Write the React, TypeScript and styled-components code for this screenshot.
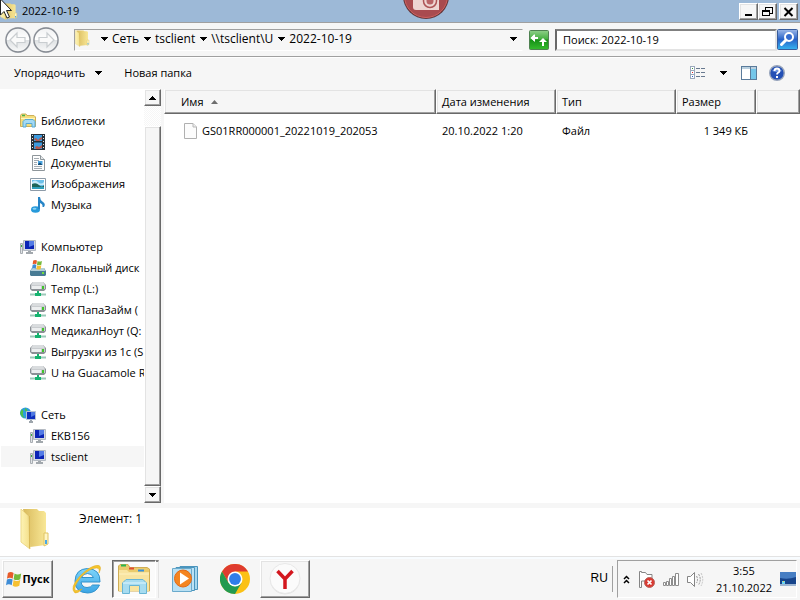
import React from "react";
import styled, { createGlobalStyle, css } from "styled-components";

const GlobalStyle = createGlobalStyle`
  * { box-sizing: border-box; }
  html, body, #root { height: 100%; }
  body { margin: 0; overflow: hidden; }
  body, button, input, table {
    font-family: "Open Sans", "Noto Sans", sans-serif;
    font-size: 11px;
    line-height: 16px;
    color: #000;
  }
  button { padding: 0; margin: 0; border: 0; background: none; cursor: default; }
  svg { display: block; flex: none; }
  a { color: inherit; text-decoration: none; }
`;

const raised = css`
  background: #f6f6f6;
  border: 1px solid;
  border-color: #fff #696969 #696969 #fff;
  box-shadow: inset -1px -1px 0 #a0a0a0, inset 1px 1px 0 #e3e3e3;
`;

const sunken = css`
  border: 1px solid;
  border-color: #a0a0a0 #fff #fff #a0a0a0;
`;

const Desktop = styled.div`
  position: relative;
  display: flex;
  flex-direction: column;
  height: 100vh;
  overflow: hidden;
  background: #fff;
`;

const TitleBar = styled.header`
  display: flex;
  align-items: center;
  justify-content: space-between;
  height: 22px;
  padding: 0 2px 0 0;
  background: #9db9d7;
`;

const WindowTitle = styled.h1`
  display: flex;
  align-items: center;
  gap: 4px;
  margin: 0;
  font-size: 11px;
  font-weight: 400;
`;

const WindowButtons = styled.div`
  display: flex;
`;

const WindowButton = styled.button<{ $apart?: boolean }>`
  ${raised}
  display: grid;
  place-items: center;
  width: 19px;
  height: 17px;
  margin-left: ${(p) => (p.$apart ? 2 : 0)}px;
`;

const AddressBar = styled.div`
  display: flex;
  align-items: center;
  height: 35px;
  padding: 0 2px 0 4px;
  background: #f6f6f6;
  border-top: 1px solid #a0a0a0;
  border-bottom: 1px solid #a0a0a0;
`;

const History = styled.div`
  display: flex;
  width: 70px;
`;

const HistoryButton = styled.button`
  width: 28px;
  height: 28px;
`;

const Breadcrumbs = styled.nav`
  display: flex;
  flex: 1;
  align-items: center;
  gap: 4px;
  height: 22px;
  padding: 0 5px 2px 0;
  border: 1px solid;
  border-color: #a0a0a0 #f6f6f6 #fff #a0a0a0;
`;

const Crumb = styled.a`
  font-size: 12px;
  white-space: nowrap;
`;

const ArrowButton = styled.button<{ $end?: boolean; $gap?: number }>`
  width: 8px;
  height: 16px;
  display: grid;
  place-items: center;
  margin-left: ${(p) => (p.$end ? "auto" : `${p.$gap ?? 0}px`)};
`;

const IconButton = styled.button`
  display: grid;
  place-items: center;
`;

const RefreshButton = styled(IconButton)`
  width: 22px;
  margin: 0 5px;
`;

const SearchInput = styled.input`
  width: 222px;
  height: 22px;
  padding: 0 6px;
  background: #fff;
  border: 2px solid;
  border-color: #808080 #e3e3e3 #e3e3e3 #696969;
  border-radius: 0;
  outline: 0;
  &::placeholder { color: #000; opacity: 1; }
`;

const CommandBar = styled.div`
  display: flex;
  align-items: center;
  height: 32px;
  padding: 0 15px 2px 14px;
  background: #f6f6f6;
  border-top: 1px solid #fff;
`;

const Command = styled.button`
  display: flex;
  align-items: center;
  gap: 10px;
  margin-right: 22px;
`;

const ViewTools = styled.div`
  display: flex;
  align-items: center;
  gap: 12px;
  margin-left: auto;
`;

const MoreViews = styled(IconButton)`
  margin: 0 2px;
`;

const Content = styled.div`
  display: flex;
  flex: 1;
  min-height: 0;
`;

const Sidebar = styled.nav`
  width: 144px;
  padding: 21px 0 0 1px;
  overflow: hidden;
`;

const Group = styled.ul`
  margin: 0 0 21px;
  padding: 0;
  list-style: none;
`;

const NavItem = styled.a<{ $child?: boolean; $current?: boolean }>`
  display: flex;
  align-items: center;
  gap: 5px;
  height: 21px;
  padding-left: ${(p) => (p.$child ? 29 : 19)}px;
  white-space: nowrap;
  background: ${(p) => (p.$current ? "#f6f6f6" : "none")};
`;

const ScrollBar = styled.div`
  display: flex;
  flex-direction: column;
  width: 17px;
  background: repeating-conic-gradient(#f6f6f6 0 25%, #fff 0 50%) 0 0 / 2px 2px;
`;

const ScrollButton = styled.button`
  ${raised}
  display: grid;
  place-items: center;
  height: 17px;
`;

const ScrollThumb = styled.div`
  ${raised}
  flex: 1;
  margin-top: 20px;
`;

const FilePane = styled.main`
  flex: 1;
  min-width: 0;
  border-left: 3px solid #f6f6f6;
`;

const FileTable = styled.table`
  width: 100%;
  table-layout: fixed;
  border-collapse: separate;
  border-spacing: 0;
`;

const HeadCell = styled.th<{ $width?: number; $first?: boolean }>`
  width: ${(p) => (p.$width ? `${p.$width}px` : "auto")};
  height: 25px;
  padding: 1px 0 0 ${(p) => (p.$first ? 16 : 5)}px;
  font-weight: 400;
  text-align: left;
  background: #f6f6f6;
  border: 1px solid;
  border-color: #f6f6f6 #696969 #696969 #fff;
  box-shadow: inset -1px -1px 0 #a0a0a0, inset 1px 1px 0 #e3e3e3;
`;

const Inline = styled.span<{ $gap: number }>`
  display: flex;
  align-items: center;
  gap: ${(p) => p.$gap}px;
`;

const Cell = styled.td<{ $first?: boolean; $right?: boolean }>`
  height: 34px;
  padding: 0 8px 0 ${(p) => (p.$first ? 20 : 6)}px;
  white-space: nowrap;
  text-align: ${(p) => (p.$right ? "right" : "left")};
`;

const Details = styled.footer`
  display: flex;
  gap: 29px;
  height: 53px;
  padding: 0 20px;
  border-top: 5px solid #f6f6f6;
`;

const DetailsText = styled.span`
  padding-top: 3px;
  font-size: 12px;
`;

const TaskBar = styled.div`
  display: flex;
  align-items: stretch;
  height: 44px;
  padding: 3px 3px 2px 2px;
  background: #f6f6f6;
  border-top: 1px solid #e3e3e3;
  box-shadow: inset 0 2px 0 #f8fcff;
`;

const StartButton = styled.button`
  ${raised}
  display: flex;
  align-items: center;
  justify-content: center;
  gap: 1px;
  width: 51px;
  margin-right: 9px;
  font-size: 11px;
  font-weight: 700;
`;

const TaskButton = styled.button<{ $look?: "open" | "stack" }>`
  display: grid;
  place-items: center;
  width: 50px;
  ${(p) => p.$look === "open" && raised}
  ${(p) =>
    p.$look === "stack" &&
    css`
      width: 44px;
      background: #fbfbfb;
      border: 1px solid;
      border-color: #696969 #fff #fff #696969;
      box-shadow: inset 1px 1px 0 #a0a0a0;
    `}
`;

const StackEdge = styled.span`
  width: 3px;
  margin-right: 1px;
  border-top: 2px solid #808080;
  border-right: 1px solid #e3e3e3;
`;

const Language = styled.button`
  height: 26px;
  align-self: center;
  margin: 0 4px 0 auto;
  padding: 0 4px 2px 0;
  border-right: 1px solid #a0a0a0;
  font-family: "Liberation Sans", sans-serif;
  font-size: 12px;
`;

const Tray = styled.div`
  ${sunken}
  display: flex;
  align-items: center;
  gap: 8px;
  padding-left: 5px;
`;

const Clock = styled.time`
  margin-left: 4px;
  text-align: center;
  line-height: 17px;
`;

const CameraBadge = styled.div`
  position: absolute;
  top: 0;
  left: calc(50% + 2px);
`;

const Pointer = styled.div`
  position: absolute;
  top: 0;
  left: 0;
`;

const Down = () => (
  <svg width="7" height="4" shapeRendering="crispEdges">
    <path d="M0 0H7L3.5 4Z" />
  </svg>
);

const FolderIcon = ({ w = 16, h = 17 }: { w?: number; h?: number }) => (
  <svg width={w} height={h} viewBox="0 0 30 42" preserveAspectRatio="none">
    <defs>
      <linearGradient id="fo">
        <stop offset="0" stopColor="#fdf3b5" />
        <stop offset="1" stopColor="#f4df88" />
      </linearGradient>
      <linearGradient id="fb">
        <stop offset="0" stopColor="#d9ba5c" />
        <stop offset="1" stopColor="#f8e796" />
      </linearGradient>
    </defs>
    <path d="M3 1H17L19 3H24L26 5V37L10 39Z" fill="url(#fb)" />
    <path d="M1 1L8 8L10 41L1 34Z" fill="url(#fo)" stroke="#edd98a" />
    <path d="M9 8H10V40L9 41Z" fill="#d9b957" />
    <path d="M24 25H28V36L24 38Z" fill="#fff6c6" stroke="#e0c465" />
    <path d="M26 32V36" stroke="#49a8e8" strokeWidth="2" />
  </svg>
);

const NavCircle = ({ forward }: { forward?: boolean }) => (
  <svg width="28" height="28" viewBox="0 0 28 28">
    <defs>
      <linearGradient id="nc" x2="0" y2="1">
        <stop offset="0" stopColor="#f0f1f2" />
        <stop offset=".48" stopColor="#fff" />
        <stop offset=".52" stopColor="#dfe2e4" />
        <stop offset="1" stopColor="#fafafa" />
      </linearGradient>
    </defs>
    <circle cx="14" cy="14" r="13" fill="#d2d4d7" />
    <circle cx="14" cy="14" r="12" fill="url(#nc)" stroke="#868b93" strokeWidth="1.3" />
    <path
      d="M6 14L13 7V11.5H21V16.5H13V21Z"
      transform={forward ? "rotate(180 14 14)" : undefined}
      fill="#fafafa"
      stroke="#c9cdd0"
      strokeWidth="1.2"
    />
  </svg>
);

const LibraryIcon = () => (
  <svg width="16" height="16">
    <path d="M.5 2.5L1.5 1H6L7 2.5H14L15.5 4V13.5H.5Z" fill="#f3dd7c" stroke="#ceb058" />
    <path d="M2 2.5H5" stroke="#48b14b" strokeWidth="1.5" />
    <path d="M1 5.5H15" stroke="#fff5bc" />
    <path d="M3 14V8.5L5 6.5H13L15 8.5V14H12V10.5H6V14Z" fill="#a4daf5" stroke="#57a9d5" />
  </svg>
);

const VideoIcon = () => (
  <svg width="16" height="16">
    <path d="M1 0H15V16H1Z" fill="#262f38" />
    <path d="M4 1H12V7H4ZM4 8.5H12V15H4Z" fill="#3b9be0" />
    <path d="M4 5L6 4L8 6L10 4L12 3V5L9 7H6ZM5 13L7 12L9 13L12 11V14L9 15H6Z" fill="#b5584c" />
    <path d="M2.5 1V16M13.5 1V16" stroke="#e3e8ea" strokeDasharray="1 2" />
  </svg>
);

const DocIcon = () => (
  <svg width="16" height="16">
    <path d="M2.5 .5H10.5L14.5 4.5V15.5H2.5Z" fill="#fdfdfd" stroke="#8e969b" />
    <path d="M10.5 .5V4.5H14.5" fill="#e5e8ea" stroke="#8e969b" />
    <path d="M4 3.5H9M4 5.5H9M4 7.5H7M4 9.5H7M4 11.5H12M4 13.5H12" stroke="#a3abb2" />
    <path d="M8 6H12.5V10H8Z" fill="#4aa3de" />
    <path d="M8 9L10 7.5L12.5 10H8Z" fill="#124d78" />
  </svg>
);

const ImageIcon = () => (
  <svg width="16" height="16">
    <path d="M.5 2.5H15.5V14.5H.5Z" fill="#fff" stroke="#8d9ba8" />
    <path d="M2 4H14V13H2Z" fill="#6cc0ea" />
    <path d="M2 6Q5 3 8 6T14 6V9H2Z" fill="#c6eafa" />
    <path d="M2 8Q6 6 9 9T14 9V11H2Z" fill="#1d6558" />
    <path d="M2 11H14V13H2Z" fill="#2d9fbb" />
  </svg>
);

const MusicIcon = () => (
  <svg width="16" height="16">
    <ellipse cx="5.5" cy="12.5" rx="4.5" ry="3.2" fill="#279ada" />
    <ellipse cx="4.5" cy="11.8" rx="2" ry="1" fill="#8cd2f4" />
    <path d="M8 0H10Q10 3 13 5T14 10H12.5Q13 7 10 6V12H8Z" fill="#2584c7" />
  </svg>
);

const MonitorIcon = () => (
  <svg width="16" height="16">
    <path d="M.5 4.5H2.5V14.5H.5Z" fill="#dfe3e6" stroke="#a8adb2" />
    <path d="M1 6H2V8H1Z" fill="#36ae3d" />
    <path d="M3.5 1.5H15.5V11.5H3.5Z" fill="#d4dae2" stroke="#b4bac2" />
    <path d="M5 2H14V10H5Z" fill="#0b24b5" />
    <path d="M9 2H14V6L9 8Z" fill="#537be6" />
    <path d="M8 12H11V13H13V15H6V13H8Z" fill="#a2a8ad" />
  </svg>
);

const Flag = ({ x, y, s }: { x: number; y: number; s: number }) => (
  <g transform={`translate(${x} ${y}) scale(${s})`}>
    <path d="M2 1Q5 -1 8 1L7 7Q4 5 1 7Z" fill="#e75b2a" />
    <path d="M9 1.5Q12 3.5 16 1.5L15 7.5Q11 9.5 8 7.5Z" fill="#75b93b" />
    <path d="M1 8Q4 6 7 8L6 14Q3 12 0 14Z" fill="#3f8dd6" />
    <path d="M8 8.5Q11 10.5 15 8.5L14 14.5Q10 16.5 7 14.5Z" fill="#f6c032" />
  </g>
);

const LocalDiskIcon = () => (
  <svg width="16" height="16">
    <path d="M2 8H14L16 11V15L15 16H1L0 15V11Z" fill="#487b94" />
    <path d="M2 8H14L15.5 11H.5Z" fill="#b4ced8" />
    <path d="M12 12H14V14H12Z" fill="#72e03b" />
    <Flag x={2} y={0} s={0.62} />
  </svg>
);

const NetDriveIcon = () => (
  <svg width="16" height="16">
    <path d="M3 1H13L16 4V8L14 10H2L0 8V4Z" fill="#8b9095" />
    <path d="M3 1H13L15 4H1Z" fill="#d9dcde" />
    <path d="M1 4H15V8H1Z" fill="#c9cccf" />
    <path d="M2 5H11V8H2Z" fill="#eceeef" />
    <path d="M12 5H14V8H12Z" fill="#3fc52a" />
    <path d="M7 10H9V12H11V15H5V12H7Z" fill="#16b36f" />
    <path d="M0 13.5H5M11 13.5H16" stroke="#9cc9b9" strokeWidth="2" />
  </svg>
);

const NetworkIcon = () => (
  <svg width="16" height="16">
    <circle cx="5.5" cy="6" r="5.5" fill="#2d9de0" />
    <path d="M2 2Q4 4 3 6T5 11Q1 10 0 6ZM5 1Q8 2 7 5L5 4Z" fill="#4fc14a" />
    <path d="M6.5 4.5H15.5V12.5H6.5Z" fill="#0e2fbd" stroke="#b9c4d4" />
    <path d="M11 5H15V8L11 10Z" fill="#4e78e2" />
    <path d="M10 13H12V14H13V16H9V14H10Z" fill="#9da5ac" />
  </svg>
);

const FileIcon = () => (
  <svg width="14" height="17">
    <path d="M.5 .5H9L12.5 4V15.5H.5Z" fill="#fcfcfc" stroke="#b0b0b0" />
    <path d="M9 .5V4H12.5" fill="#eee" stroke="#b8b8b8" />
  </svg>
);

const RefreshIcon = () => (
  <svg width="20" height="20">
    <defs>
      <linearGradient id="rg" x2="0" y2="1">
        <stop offset="0" stopColor="#8fd089" />
        <stop offset=".45" stopColor="#45b041" />
        <stop offset=".5" stopColor="#169016" />
        <stop offset="1" stopColor="#35bc2e" />
      </linearGradient>
    </defs>
    <rect x=".5" y=".5" width="19" height="19" rx="1" fill="url(#rg)" stroke="#4f8151" />
    <path d="M1.500 8L5 4.500V7H8.500V9H7V8.500H5.500V11.500Z" fill="#fff" />
    <path d="M2 8L6 4V7H9V9H6V12Z" fill="#fff" />
    <path d="M10 12L14 8L18 12H15V16H13V12Z" fill="#fff" />
  </svg>
);

const SearchIcon = () => (
  <svg width="21" height="21">
    <defs>
      <linearGradient id="sg" x2="0" y2="1">
        <stop offset="0" stopColor="#9eb9e8" />
        <stop offset=".5" stopColor="#2862c8" />
        <stop offset="1" stopColor="#36b4f0" />
      </linearGradient>
    </defs>
    <rect x=".5" y=".5" width="20" height="20" rx="1" fill="url(#sg)" stroke="#385c9b" />
    <circle cx="12" cy="8" r="4" fill="#356cce" stroke="#fff" strokeWidth="2" />
    <path d="M9 11L4.5 15.5" stroke="#fff" strokeWidth="3" strokeLinecap="round" />
  </svg>
);

const ViewIcon = () => (
  <svg width="16" height="14" shapeRendering="crispEdges">
    <path d="M.5 .5H4.5V12.5H.5ZM.5 4.5H4.5M.5 8.5H4.5" fill="#fff" stroke="#9aa9bc" />
    <path d="M2 2H3V3H2Z" fill="#3a9443" />
    <path d="M2 6H3V7H2Z" fill="#e12424" />
    <path d="M2 10H3V11H2Z" fill="#2757c8" />
    <path d="M6 2.5H10M11 2.5H15M6 6.5H10M11 6.5H15M6 10.5H10M11 10.5H15" stroke="#68798f" />
  </svg>
);

const PreviewIcon = () => (
  <svg width="16" height="14" shapeRendering="crispEdges">
    <path d="M.5 .5H15.5V13.5H.5Z" fill="#fff" stroke="#5a7b9b" />
    <path d="M1 1H15V3H1Z" fill="#bad0df" />
    <path d="M10 3H15V13H10Z" fill="#74c6e9" />
    <path d="M9.5 1V13" stroke="#5a7b9b" />
  </svg>
);

const HelpIcon = () => (
  <svg width="16" height="16">
    <circle cx="8" cy="8" r="7.3" fill="#2350b5" stroke="#98a5bb" strokeWidth="1.4" />
    <path d="M3 6Q8 0 13 6Q8 8 3 6Z" fill="#6f96df" />
    <path d="M5.5 6Q5.5 3.5 8 3.5T10.5 6Q10.5 7 9 7.8Q8 8.4 8 9.5" fill="none" stroke="#fff" strokeWidth="1.8" />
    <path d="M7 11H9V13H7Z" fill="#fff" />
  </svg>
);

const IEIcon = () => (
  <svg width="30" height="31" viewBox="0 0 30 31">
    <defs>
      <linearGradient id="ie" x2="0" y2="1">
        <stop offset="0" stopColor="#7fd5fa" />
        <stop offset="1" stopColor="#3aa5e5" />
      </linearGradient>
    </defs>
    <path
      fillRule="evenodd"
      d="M28 18H9Q10 23.5 15 23.5Q19 23.5 20.5 21H27.5Q24 29 15.5 29Q3 28.5 3 17Q3.5 5 15.5 4.5Q28.5 5 28 18ZM9.5 13.5H21.5Q20 9.5 15.5 9.5T9.5 13.5Z"
      fill="url(#ie)"
      stroke="#3192cc"
    />
    <path d="M3 29Q-3 24 8 12Q20 0 27 1.5Q30 3 27 9Q28 4 24.5 4Q18 4 9 13Q0 25 4 26.5Q6 27 10 25Q6 29.5 3 29Z" fill="#f4c42c" stroke="#e0a91a" strokeWidth=".5" />
  </svg>
);

const ExplorerIcon = () => (
  <svg width="34" height="30">
    <path d="M1.5 27V2L3 .5H11L13 3.5H30L32.5 5V27Z" fill="#eacb6c" stroke="#cfad54" />
    <path d="M4 1.5H9" stroke="#29b64f" strokeWidth="2" />
    <path d="M12 4.5H17" stroke="#e24b32" strokeWidth="2" />
    <path d="M21 6.5H27" stroke="#3691dc" strokeWidth="2" />
    <path d="M2 6H10L12 8H32V27H2Z" fill="#f8e4a0" />
    <path d="M2 10H32" stroke="#fff2c0" />
    <path d="M5.5 29.5V19L9 15.5H26L29.5 19V29.5H22.5V21.5H12.5V29.5Z" fill="#a7dcf0" stroke="#68b5d5" />
    <path d="M6 19H29" stroke="#dff6ff" />
  </svg>
);

const PlayerIcon = () => (
  <svg width="27" height="26">
    <path d="M8 .5H25.5V23.5H8Z" fill="#a7d8ef" stroke="#4b95bd" />
    <path d="M4 1.5H22.5V24.5H4Z" fill="#bce2f5" stroke="#4b95bd" />
    <path d="M.5 2.5H19.5V25.5H.5Z" fill="#b9e0f3" stroke="#6aaacc" />
    <circle cx="11" cy="12.5" r="8.5" fill="#f48520" stroke="#e36915" />
    <path d="M8 6.5L17 12.5L8 18.5Z" fill="#fff" />
  </svg>
);

const ChromeIcon = () => (
  <svg width="30" height="30" viewBox="0 0 48 48">
    <circle cx="24" cy="24" r="24" fill="#fbc116" />
    <path d="M3.2 12A24 24 0 0 1 44.8 12H24L13.6 30Z" fill="#df3b2f" />
    <path d="M3.2 12A24 24 0 0 0 24 48L34.4 30L24 36L13.6 30Z" fill="#239a50" />
    <circle cx="24" cy="24" r="12" fill="#fff" />
    <circle cx="24" cy="24" r="9.5" fill="#2f7de9" />
  </svg>
);

const YandexIcon = () => (
  <svg width="32" height="32">
    <circle cx="16" cy="16.5" r="15" fill="#e2e2e2" />
    <circle cx="16" cy="15.5" r="15" fill="#fbfbfb" stroke="#e8e8e8" />
    <path d="M8.5 8L16 16L23.5 8M16 15.5V26" fill="none" stroke="#d3171e" strokeWidth="3.5" />
  </svg>
);

const TrayUp = () => (
  <svg width="7" height="9">
    <path d="M1 4L3.5 1.5L6 4M1 8L3.5 5.5L6 8" fill="none" stroke="#000" strokeWidth="1.5" />
  </svg>
);

const TrayFlag = () => (
  <svg width="17" height="17">
    <path d="M1.5 .5V16.5H3.5V10H14V3.5H9L7.5 1.5H3.5V.5Z" fill="#fff" stroke="#858585" />
    <circle cx="11.5" cy="11.5" r="5" fill="#d93931" stroke="#b7655f" />
    <path d="M9.5 9.5L13.5 13.5M13.5 9.5L9.5 13.5" stroke="#fff" strokeWidth="1.7" />
  </svg>
);

const TraySignal = () => (
  <svg width="16" height="13">
    <path d="M.5 9.5H2.5V12.5H.5ZM3.5 8.5H5.5V12.5H3.5ZM6.5 5.5H8.5V12.5H6.5ZM9.5 3.5H11.5V12.5H9.5ZM12.5 .5H15.5V12.5H12.5Z" fill="#fff" stroke="#8d8d8d" />
  </svg>
);

const TrayVolume = () => (
  <svg width="17" height="15">
    <path d="M.5 4.5H3.5L7.5 .5V14.5L3.5 10.5H.5Z" fill="#fff" stroke="#858585" />
    <path d="M9.5 4Q11.5 7.5 9.5 11M11.5 2Q15 7.5 11.5 13" fill="none" stroke="#969696" strokeDasharray="2 1" />
    <path d="M14 1Q17.5 7.5 14 14" fill="none" stroke="#c4c4c4" strokeDasharray="2 1" />
  </svg>
);

const DesktopIcon = () => (
  <svg width="16" height="14">
    <path d="M0 0H16V12H0Z" fill="#17448b" />
    <path d="M0 0H16V5Q8 8 0 6Z" fill="#477ec3" />
    <path d="M0 12H16V14H0Z" fill="#9fb6d2" />
    <path d="M2 9H5V12H2Z" fill="#6bd3f1" />
    <path d="M3 9H4V10H3Z" fill="#f6cf37" />
  </svg>
);

const Camera = () => (
  <svg width="48" height="22">
    <circle cx="24" cy="-4" r="23" fill="#65373b" />
    <circle cx="24" cy="-4" r="21.5" fill="#a94b4f" stroke="#d2625f" />
    <path d="M11 0H37V10H14Q11 10 11 7Z" fill="#eed5d2" />
    <circle cx="28" cy="1" r="6.5" fill="#eed5d2" stroke="#ad5456" strokeWidth="1.5" />
    <circle cx="28" cy="1" r="3.5" fill="#b96467" />
  </svg>
);

const PointerIcon = () => (
  <svg width="13" height="20">
    <path d="M.5 -1V15L4 11.5L7 18L9.5 17L6.5 10.5H11.5L.5 -1Z" fill="#fff" stroke="#222" />
  </svg>
);

type Entry = { label: string; icon: React.ReactNode; current?: boolean };

const groups: { head: Entry; items: Entry[] }[] = [
  {
    head: { label: "Библиотеки", icon: <LibraryIcon /> },
    items: [
      { label: "Видео", icon: <VideoIcon /> },
      { label: "Документы", icon: <DocIcon /> },
      { label: "Изображения", icon: <ImageIcon /> },
      { label: "Музыка", icon: <MusicIcon /> },
    ],
  },
  {
    head: { label: "Компьютер", icon: <MonitorIcon /> },
    items: [
      { label: "Локальный диск", icon: <LocalDiskIcon /> },
      { label: "Temp (L:)", icon: <NetDriveIcon /> },
      { label: "МКК ПапаЗайм (", icon: <NetDriveIcon /> },
      { label: "МедикалНоут (Q:", icon: <NetDriveIcon /> },
      { label: "Выгрузки из 1с (S", icon: <NetDriveIcon /> },
      { label: "U на Guacamole R", icon: <NetDriveIcon /> },
    ],
  },
  {
    head: { label: "Сеть", icon: <NetworkIcon /> },
    items: [
      { label: "EKB156", icon: <MonitorIcon /> },
      { label: "tsclient", icon: <MonitorIcon />, current: true },
    ],
  },
];

const path = ["Сеть", "tsclient", "\\\\tsclient\\U", "2022-10-19"];

export default function App() {
  return (
    <Desktop>
      <GlobalStyle />
      <TitleBar>
        <WindowTitle>
          <FolderIcon w={18} />
          2022-10-19
        </WindowTitle>
        <WindowButtons>
          <WindowButton aria-label="Свернуть">
            <svg width="11" height="11"><path d="M2 8H9V10H2Z" /></svg>
          </WindowButton>
          <WindowButton aria-label="Восстановить">
            <svg width="11" height="11" shapeRendering="crispEdges">
              <path d="M3 4V1H10V7H8M3 1.5H10M.5 4.5H7.5V9.5H.5ZM.5 5.5H7.5" fill="none" stroke="#000" />
            </svg>
          </WindowButton>
          <WindowButton aria-label="Закрыть" $apart>
            <svg width="11" height="11"><path d="M1.5 2L9.5 10M9.5 2L1.5 10" stroke="#000" strokeWidth="2" /></svg>
          </WindowButton>
        </WindowButtons>
      </TitleBar>

      <AddressBar>
        <History>
          <HistoryButton aria-label="Назад"><NavCircle /></HistoryButton>
          <HistoryButton aria-label="Вперед"><NavCircle forward /></HistoryButton>
        </History>
        <Breadcrumbs aria-label="Адрес">
          <FolderIcon w={15} />
          {path.map((part, i) => (
            <React.Fragment key={part}>
              <ArrowButton aria-label="Открыть список" $gap={i === 0 ? 6 : 0}><Down /></ArrowButton>
              <Crumb href="#">{part}</Crumb>
            </React.Fragment>
          ))}
          <ArrowButton aria-label="Предыдущие расположения" $end><Down /></ArrowButton>
        </Breadcrumbs>
        <RefreshButton aria-label="Обновить"><RefreshIcon /></RefreshButton>
        <SearchInput type="text" aria-label="Поиск" placeholder="Поиск: 2022-10-19" />
        <IconButton aria-label="Найти"><SearchIcon /></IconButton>
      </AddressBar>

      <CommandBar>
        <Command>Упорядочить <Down /></Command>
        <Command>Новая папка</Command>
        <ViewTools>
          <IconButton aria-label="Вид"><ViewIcon /></IconButton>
          <MoreViews aria-label="Другие виды"><Down /></MoreViews>
          <IconButton aria-label="Область просмотра"><PreviewIcon /></IconButton>
          <IconButton aria-label="Справка"><HelpIcon /></IconButton>
        </ViewTools>
      </CommandBar>

      <Content>
        <Sidebar aria-label="Папки">
          {groups.map(({ head, items }) => (
            <Group key={head.label}>
              <li><NavItem href="#">{head.icon}{head.label}</NavItem></li>
              {items.map((item) => (
                <li key={item.label}>
                  <NavItem href="#" $child $current={item.current}>{item.icon}{item.label}</NavItem>
                </li>
              ))}
            </Group>
          ))}
        </Sidebar>
        <ScrollBar>
          <ScrollButton aria-label="Вверх">
            <svg width="7" height="4" shapeRendering="crispEdges"><path d="M0 4H7L3.5 0Z" /></svg>
          </ScrollButton>
          <ScrollThumb />
          <ScrollButton aria-label="Вниз"><Down /></ScrollButton>
        </ScrollBar>
        <FilePane>
          <FileTable>
            <thead>
              <tr>
                <HeadCell $width={272} $first>
                  <Inline $gap={7}>
                    Имя
                    <svg width="7" height="4"><path d="M0 4H7L3.5 0Z" fill="#6d6d6d" /></svg>
                  </Inline>
                </HeadCell>
                <HeadCell $width={120}>Дата изменения</HeadCell>
                <HeadCell $width={120}>Тип</HeadCell>
                <HeadCell $width={80}>Размер</HeadCell>
                <HeadCell />
              </tr>
            </thead>
            <tbody>
              <tr>
                <Cell $first><Inline $gap={4}><FileIcon />GS01RR000001_20221019_202053</Inline></Cell>
                <Cell>20.10.2022 1:20</Cell>
                <Cell>Файл</Cell>
                <Cell $right>1 349 КБ</Cell>
                <Cell />
              </tr>
            </tbody>
          </FileTable>
        </FilePane>
      </Content>

      <Details>
        <FolderIcon w={30} h={42} />
        <DetailsText>Элемент: 1</DetailsText>
      </Details>

      <TaskBar>
        <StartButton>
          <svg width="16" height="16"><Flag x={0} y={1} s={0.95} /></svg>
          Пуск
        </StartButton>
        <TaskButton aria-label="Internet Explorer"><IEIcon /></TaskButton>
        <TaskButton $look="stack" aria-label="Проводник"><ExplorerIcon /></TaskButton>
        <StackEdge />
        <TaskButton aria-label="Windows Media Player"><PlayerIcon /></TaskButton>
        <TaskButton aria-label="Google Chrome"><ChromeIcon /></TaskButton>
        <TaskButton $look="open" aria-label="Yandex"><YandexIcon /></TaskButton>
        <Language>RU</Language>
        <Tray>
          <IconButton aria-label="Показать скрытые значки"><TrayUp /></IconButton>
          <TrayFlag />
          <TraySignal />
          <TrayVolume />
          <Clock>3:55<br />21.10.2022</Clock>
          <IconButton aria-label="Рабочий стол"><DesktopIcon /></IconButton>
        </Tray>
      </TaskBar>

      <CameraBadge><Camera /></CameraBadge>
      <Pointer><PointerIcon /></Pointer>
    </Desktop>
  );
}
